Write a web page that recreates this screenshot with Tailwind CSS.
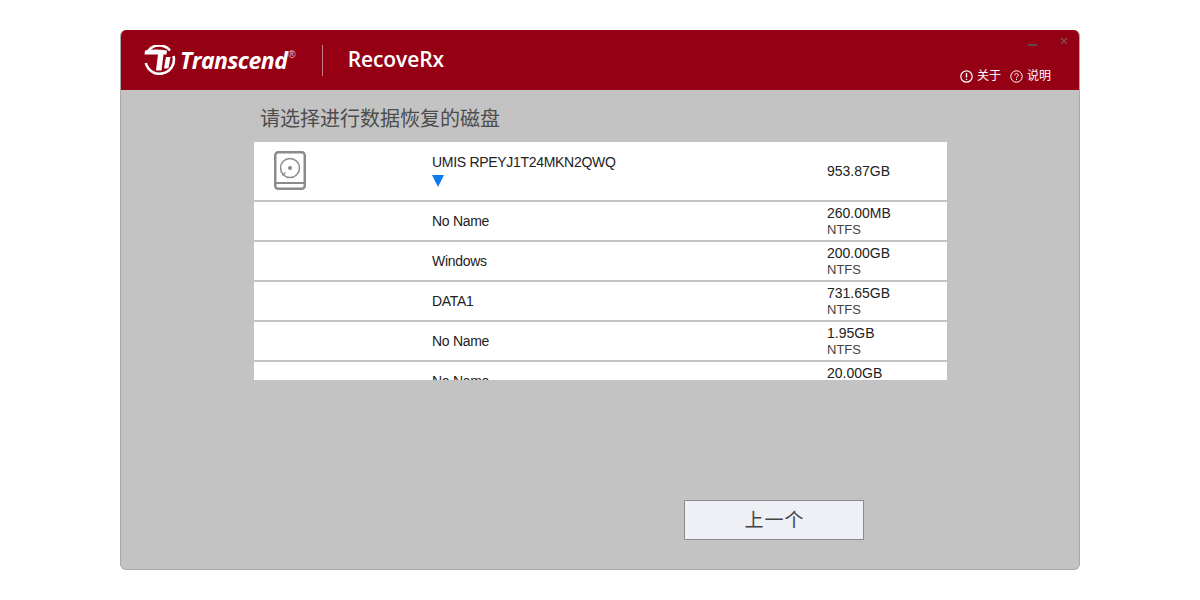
<!DOCTYPE html>
<html lang="zh-CN">
<head>
    <meta charset="UTF-8">
    <title>RecoveRx</title>
    <script src="https://cdn.jsdelivr.net/npm/@tailwindcss/browser@4"></script>
</head>
<body class="bg-white font-['Liberation_Sans','Noto_Sans_CJK_SC',sans-serif]">
    <div class="w-[1200px] h-[600px] pt-[30px] overflow-hidden">
        <div class="w-[960px] h-[540px] mx-auto rounded-[6px] bg-[#c3c3c3] border border-[#a9a9a9] border-t-0 overflow-hidden flex flex-col">

            <!-- Header -->
            <header class="h-[60px] shrink-0 bg-[#960014] flex justify-between text-white -mx-px">
                <div class="flex items-center pl-[23px]">
                    <svg width="33" height="30" viewBox="0 0 33 30" fill="none">
                        <path d="M5 6A14 14 0 0 1 27 5.500" stroke="#fff" stroke-width="2.600"/>
                        <path d="M30.500 11A14 14 0 0 1 2.800 18" stroke="#fff" stroke-width="2.600"/>
                        <path d="M2 5.500Q12 3.500 24 5.500L23.500 9.500H20.500L18.500 25.500H13L15 9.500H1.500Z" fill="#fff"/>
                        <path d="M23 12H27.500L25.500 23Q23 24 21 23Z" fill="#fff"/>
                    </svg>
                    <span class="ml-[4px] text-[23px] leading-[30px] font-bold italic tracking-[-0.5px] font-['Open_Sans',sans-serif]">Transcend</span>
                    <span class="self-start mt-[20px] ml-px text-[10px] leading-[10px] text-[#e8c0c5]">®</span>
                    <div class="w-px h-[31px] bg-[#cf7f8a] ml-[26px]"></div>
                    <span class="ml-[25px] text-[21px] font-semibold font-['Open_Sans',sans-serif] tracking-[-0.1px]">RecoveRx</span>
                </div>
                <div class="flex flex-col items-end pr-[29px]">
                    <div class="flex items-center gap-[23px] h-[24px] -mr-[17px]">
                        <div class="w-[9px] h-[2px] mt-[5px] bg-[#64464c]"></div>
                        <svg width="8" height="8" viewBox="0 0 8 8" class="-mt-[2px]" stroke="#7b4a50" stroke-width="1.600">
                            <path d="M1 1L7 7M7 1L1 7"/>
                        </svg>
                    </div>
                    <div class="flex items-center mt-[14px] text-[12px] leading-[16px]">
                        <svg width="13" height="13" viewBox="0 0 13 13" fill="none" stroke="#fff">
                            <circle cx="6.500" cy="6.500" r="5.700" stroke-width="1.200"/>
                            <path d="M6.500 3V7.500M6.500 8.800V10" stroke-width="1.400"/>
                        </svg>
                        <span class="ml-[4px]">关于</span>
                        <svg width="13" height="13" viewBox="0 0 13 13" fill="none" stroke="#fff" class="ml-[9px]">
                            <circle cx="6.500" cy="6.500" r="5.700" stroke-width="1"/>
                            <path d="M4.700 5.200C4.700 3 8.300 3 8.300 5.200C8.300 6.400 6.500 6.400 6.500 7.800M6.500 8.800V10" stroke-width="1"/>
                        </svg>
                        <span class="ml-[4px]">说明</span>
                    </div>
                </div>
            </header>

            <!-- Content -->
            <main class="flex-1 flex flex-col">
                <h1 class="ml-[139px] mt-[16px] text-[20px] leading-[26px] text-[#4d4d4d]">请选择进行数据恢复的磁盘</h1>

                <div class="ml-[133px] mt-[10px] w-[693px] h-[238px] bg-white overflow-hidden text-[14px] leading-[16px] text-[#222]">
                    <div class="h-[60px] border-b-2 border-[#c3c3c3] flex">
                        <div class="w-[178px] pl-[20px] pt-[9px]">
                            <svg width="32" height="39" viewBox="0 0 32 39" fill="none" stroke="#8b8b8b">
                                <rect x="1.250" y="1.250" width="29.500" height="36.500" rx="3" stroke-width="2.500"/>
                                <path d="M2 32H30" stroke-width="2"/>
                                <circle cx="16" cy="17" r="9.500" stroke-width="1.500"/>
                                <circle cx="16" cy="17" r="2" fill="#8b8b8b" stroke="none"/>
                                <path d="M11.500 21.500L8.500 24.500" stroke-width="1.500"/>
                            </svg>
                        </div>
                        <div class="w-[395px] pt-[12px]">
                            <div class="tracking-[-0.3px]">UMIS RPEYJ1T24MKN2QWQ</div>
                            <svg width="12" height="12" viewBox="0 0 12 12" class="mt-[5px]"><path d="M0 0H12L6 12Z" fill="#0a7cf0"/></svg>
                        </div>
                        <div class="pt-[21px]">953.87GB</div>
                    </div>

                    <div class="h-[40px] border-b-2 border-[#c3c3c3] flex items-center">
                        <div class="ml-[178px] w-[395px] tracking-[-0.3px]">No Name</div>
                        <div><div>260.00MB</div><div class="h-[16px] pt-[1px] text-[13px] text-[#444]">NTFS</div></div>
                    </div>
                    <div class="h-[40px] border-b-2 border-[#c3c3c3] flex items-center">
                        <div class="ml-[178px] w-[395px] tracking-[-0.3px]">Windows</div>
                        <div><div>200.00GB</div><div class="h-[16px] pt-[1px] text-[13px] text-[#444]">NTFS</div></div>
                    </div>
                    <div class="h-[40px] border-b-2 border-[#c3c3c3] flex items-center">
                        <div class="ml-[178px] w-[395px] tracking-[-0.3px]">DATA1</div>
                        <div><div>731.65GB</div><div class="h-[16px] pt-[1px] text-[13px] text-[#444]">NTFS</div></div>
                    </div>
                    <div class="h-[40px] border-b-2 border-[#c3c3c3] flex items-center">
                        <div class="ml-[178px] w-[395px] tracking-[-0.3px]">No Name</div>
                        <div><div>1.95GB</div><div class="h-[16px] pt-[1px] text-[13px] text-[#444]">NTFS</div></div>
                    </div>
                    <div class="h-[40px] border-b-2 border-[#c3c3c3] flex items-center">
                        <div class="ml-[178px] w-[395px] tracking-[-0.3px]">No Name</div>
                        <div><div>20.00GB</div><div class="h-[16px] pt-[1px] text-[13px] text-[#444]">NTFS</div></div>
                    </div>
                </div>

                <button class="ml-[563px] mt-[120px] w-[180px] h-[40px] pt-[2px] pl-[1px] bg-[#efeff6] border border-[#8c8c8c] text-[19px] tracking-[1px] text-[#444]">上一个</button>
            </main>
        </div>
    </div>
</body>
</html>
